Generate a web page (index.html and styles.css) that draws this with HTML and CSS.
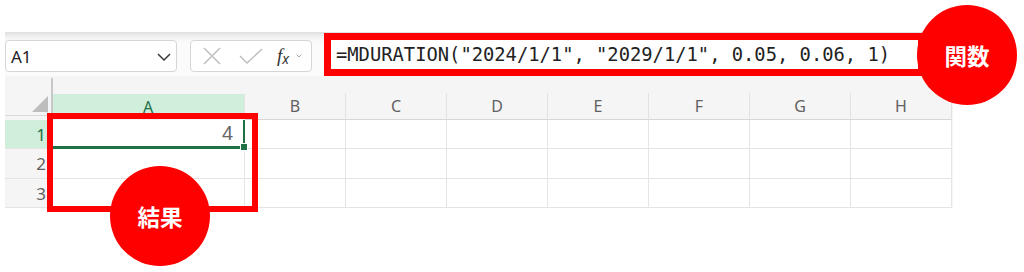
FILE: index.html
```html
<!DOCTYPE html>
<html lang="ja">
<head>
    <meta charset="UTF-8">
    <title>MDURATION</title>
    <link rel="stylesheet" href="styles.css">
</head>
<body>
    <div class="app">
        <div class="formula-row">
            <div class="name-box">
                <span>A1</span>
                <svg class="chev" width="14" height="8" viewBox="0 0 14 8"><path d="M1 1 L7 7 L13 1" fill="none" stroke="#3a3a3a" stroke-width="1.5"/></svg>
            </div>
            <div class="fx-buttons">
                <svg width="20" height="18" viewBox="0 0 20 18"><path d="M2 1 L18 17 M18 1 L2 17" stroke="#bcbcbc" stroke-width="1.4"/></svg>
                <svg width="24" height="16" viewBox="0 0 24 16"><path d="M1 8 L8 15 L23 1" fill="none" stroke="#bcbcbc" stroke-width="1.4"/></svg>
                <span class="fx"><i>f</i><sub>x</sub></span>
                <svg width="6" height="4" viewBox="0 0 6 4"><path d="M0.5 0.5 L3 3 L5.5 0.5" fill="none" stroke="#a8a8a8" stroke-width="1"/></svg>
            </div>
            <div class="formula-input">=MDURATION("2024/1/1", "2029/1/1", 0.05, 0.06, 1)</div>
        </div>
        <div class="sheet">
            <div class="corner"><span class="tri"></span></div>
            <div class="gap-row"></div>
            <div class="col-head sel">A</div>
            <div class="col-head">B</div>
            <div class="col-head">C</div>
            <div class="col-head">D</div>
            <div class="col-head">E</div>
            <div class="col-head">F</div>
            <div class="col-head">G</div>
            <div class="col-head">H</div>

            <div class="row-head sel">1</div>
            <div class="cell active">4<span class="handle"></span></div>
            <div class="cell"></div><div class="cell"></div><div class="cell"></div><div class="cell"></div>
            <div class="cell"></div><div class="cell"></div><div class="cell"></div>

            <div class="row-head">2</div>
            <div class="cell"></div><div class="cell"></div><div class="cell"></div><div class="cell"></div>
            <div class="cell"></div><div class="cell"></div><div class="cell"></div><div class="cell"></div>

            <div class="row-head">3</div>
            <div class="cell"></div><div class="cell"></div><div class="cell"></div><div class="cell"></div>
            <div class="cell"></div><div class="cell"></div><div class="cell"></div><div class="cell"></div>
        </div>
    </div>

    <!-- annotations -->
    <div class="mark-box result-box"></div>
    <div class="callout callout-func">関数</div>
    <div class="callout callout-result">結果</div>
</body>
</html>
```

FILE: styles.css
```css
body {
    margin: 0;
    background: #fff;
    font-family: "Noto Sans", "Liberation Sans", Arial, sans-serif;
    width: 1024px;
    height: 272px;
    position: relative;
    overflow: hidden;
}
.app {
    margin: 32px 0 0 5px;
    width: 948px;
    background: linear-gradient(#dedede 0, #ececec 3px, #f8f8f8 8px, #fbfbfb 12px);
}
.formula-row {
    display: flex;
    align-items: flex-start;
    height: 44px;
}
.name-box {
    box-sizing: border-box;
    margin-top: 8px;
    width: 172px;
    height: 32px;
    border: 1px solid #d6d6d6;
    border-radius: 4px;
    background: #fff;
    display: flex;
    align-items: center;
    justify-content: space-between;
    padding: 0 4px 0 5px;
    font-size: 17px;
    color: #222;
}
.name-box span {
    padding-top: 1px;
}
.chev {
    margin-right: 1px;
    margin-top: 2px;
}
.fx-buttons {
    box-sizing: border-box;
    margin: 8px 0 0 13px;
    width: 122px;
    height: 32px;
    border: 1px solid #d6d6d6;
    border-radius: 4px;
    background: #fff;
    display: flex;
    align-items: center;
    padding-left: 11px;
}
.fx-buttons svg:nth-child(2) {
    margin-left: 17px;
}
.fx {
    margin-left: 14px;
    font-family: "Liberation Serif", serif;
    font-size: 19px;
    color: #333;
    line-height: 1;
}
.fx sub {
    font-size: 14px;
    font-style: italic;
    vertical-align: -2px;
    font-family: "Noto Sans", sans-serif;
}
.fx-buttons svg:last-child {
    margin-left: 7px;
}
.formula-input {
    box-sizing: border-box;
    margin: 1px 0 0 12px;
    width: 601px;
    height: 43px;
    border: 7px solid #f00;
    background: #fff;
    padding-left: 5px;
    font-family: "DejaVu Sans Mono", "Liberation Mono", monospace;
    font-size: 18.8px;
    line-height: 29px;
    color: #222;
    white-space: nowrap;
    overflow: hidden;
}
.sheet {
    display: grid;
    grid-template-columns: 47px 193px repeat(7, 101px);
    grid-template-rows: 17px 27px 29px 30px 29px;
    background: #f5f5f5;
}
.corner {
    grid-row: 1 / 3;
    position: relative;
    border-right: 2px solid #c8c8c8;
    border-bottom: 1px solid #d9d9d9;
    margin-right: -1px;
    margin-bottom: 4px;
    margin-top: 2px;
}
.tri {
    position: absolute;
    right: 3px;
    bottom: 3px;
    width: 16px;
    height: 16px;
    background: #bdbdbd;
    clip-path: polygon(100% 0, 100% 100%, 0 100%);
}
.gap-row {
    grid-column: 2 / 10;
}
.col-head {
    box-sizing: border-box;
    border-right: 1px solid #e2e2e2;
    border-bottom: 1px solid #d6d6d6;
    text-align: center;
    font-size: 16px;
    line-height: 26px;
    color: #616161;
}
.col-head.sel {
    background: #cfeedc;
    color: #1e7145;
    border-bottom: 2px solid #f5f5f5;
    margin-top: 1px;
}
.row-head {
    box-sizing: border-box;
    border-bottom: 1px solid #e4e4e4;
    text-align: right;
    padding-right: 6px;
    font-size: 17px;
    line-height: 29px;
    color: #616161;
}
.row-head.sel {
    background: #cfeedc;
    color: #1e7145;
}
.cell {
    box-sizing: border-box;
    background: #fff;
    border-right: 1px solid #e4e4e4;
    border-bottom: 1px solid #e4e4e4;
}
.cell.active {
    position: relative;
    border-right: 2px solid #1e7145;
    border-bottom: 3px solid #1e7145;
    text-align: right;
    padding-right: 10px;
    font-family: "Liberation Sans", Arial, sans-serif;
    font-size: 20px;
    line-height: 26px;
    color: #666;
}
.handle {
    position: absolute;
    right: -5px;
    bottom: -5px;
    width: 6px;
    height: 6px;
    background: #1e7145;
    border: 1px solid #fff;
}
.mark-box {
    position: absolute;
    box-sizing: border-box;
    border: 6px solid #f00;
}
.result-box {
    left: 47px;
    top: 113px;
    width: 211px;
    height: 99px;
}
.callout {
    position: absolute;
    width: 100px;
    height: 100px;
    border-radius: 50%;
    background: #f00;
    color: #fff;
    display: flex;
    align-items: center;
    justify-content: center;
    font-family: "Noto Sans CJK JP", sans-serif;
    font-weight: bold;
    font-size: 22.5px;
}
.callout-func {
    left: 917px;
    top: 5px;
}
.callout-result {
    left: 110px;
    top: 166px;
}
```
